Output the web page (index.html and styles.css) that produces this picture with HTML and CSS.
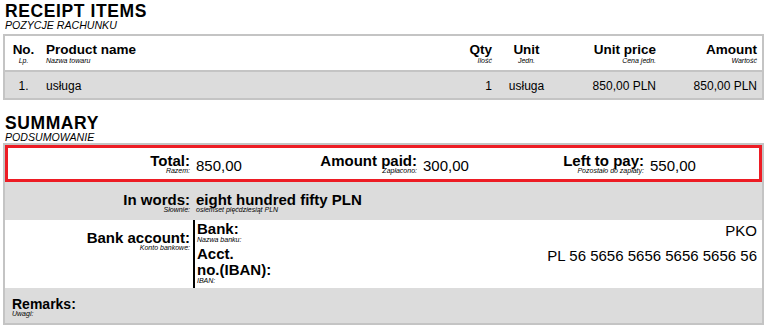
FILE: index.html
```html
<!DOCTYPE html>
<html lang="pl">
<head>
<meta charset="utf-8">
<title>Receipt</title>
<link rel="stylesheet" href="styles.css">
</head>
<body>
<div class="page">
  <section class="items">
    <h2 class="title">RECEIPT ITEMS</h2>
    <div class="subtitle">POZYCJE RACHUNKU</div>
    <div class="table">
      <div class="trow thead">
        <div class="cell c-c"><span class="h">No.</span><span class="s">Lp.</span></div>
        <div class="cell"><span class="h">Product name</span><span class="s">Nazwa towaru</span></div>
        <div class="cell c-r"><span class="h">Qty</span><span class="s">Ilość</span></div>
        <div class="cell c-c"><span class="h">Unit</span><span class="s">Jedn.</span></div>
        <div class="cell c-r"><span class="h">Unit price</span><span class="s">Cena jedn.</span></div>
        <div class="cell c-r last"><span class="h">Amount</span><span class="s">Wartość</span></div>
      </div>
      <div class="trow tbody">
        <div class="cell c-c">1.</div>
        <div class="cell">usługa</div>
        <div class="cell c-r">1</div>
        <div class="cell c-c">usługa</div>
        <div class="cell c-r">850,00 PLN</div>
        <div class="cell c-r last">850,00 PLN</div>
      </div>
    </div>
  </section>

  <section class="summary">
    <h2 class="title">SUMMARY</h2>
    <div class="subtitle">PODSUMOWANIE</div>
    <div class="box">
      <div class="totals">
        <div class="t-label"><span class="lbl">Total:</span><span class="sub">Razem:</span></div>
        <div class="t-value">850,00</div>
        <div class="t-label"><span class="lbl">Amount paid:</span><span class="sub">Zapłacono:</span></div>
        <div class="t-value">300,00</div>
        <div class="t-label"><span class="lbl">Left to pay:</span><span class="sub">Pozostało do zapłaty:</span></div>
        <div class="t-value">550,00</div>
      </div>
      <div class="srow words">
        <div class="label"><span class="lbl">In words:</span><span class="sub">Słownie:</span></div>
        <div class="value"><span class="lbl">eight hundred fifty PLN</span><span class="sub">osiemset pięćdziesiąt PLN</span></div>
      </div>
      <div class="srow bank">
        <div class="label"><span class="lbl">Bank account:</span><span class="sub">Konto bankowe:</span></div>
        <div class="details">
          <div class="bk-label"><span class="bk-lbl">Bank:</span><span class="sub">Nazwa banku:</span></div>
          <div class="bk-val">PKO</div>
          <div class="bk-label"><span class="bk-lbl">Acct. <span class="nw">no.(IBAN):</span></span><span class="sub">IBAN:</span></div>
          <div class="bk-val">PL 56 5656 5656 5656 5656 56</div>
        </div>
      </div>
      <div class="remarks">
        <span class="rlbl">Remarks:</span><span class="sub">Uwagi:</span>
      </div>
    </div>
  </section>
</div>
</body>
</html>
```

FILE: styles.css
```css
* {
  box-sizing: border-box;
  margin: 0;
  padding: 0;
}

body {
  margin: 0;
  background: #fff;
  color: #000;
  font-family: "Liberation Sans", Arial, sans-serif;
}

.page {
  padding: 2px 2px 0 3px;
}

.title {
  font-size: 17.5px;
  line-height: 18px;
  font-weight: 700;
  letter-spacing: 0.6px;
  padding-left: 2px;
}

.subtitle {
  font-size: 10.6px;
  line-height: 11px;
  font-style: italic;
  padding-left: 2px;
}

/* Items table */
.table {
  margin-top: 3px;
  border: 2px solid #c4c4c4;
}

.trow {
  display: grid;
  grid-template-columns: 37px 1fr 40px 61px 103px 102px;
}

.thead .cell {
  padding: 7px 4px 6px;
}

.h {
  display: block;
  font-size: 13.5px;
  line-height: 14px;
  font-weight: 700;
  white-space: nowrap;
}

.s {
  display: block;
  font-size: 7px;
  line-height: 7px;
  font-style: italic;
  white-space: nowrap;
}

.tbody {
  background: #dcdcdc;
  border-top: 2px solid #c4c4c4;
}

.tbody .cell {
  padding: 7px 4px 5px;
  font-size: 12px;
  line-height: 14px;
  white-space: nowrap;
}

.cell.last {
  padding-right: 5px;
}

.c-c {
  text-align: center;
}

.c-r {
  text-align: right;
}

/* Summary */
.summary .title {
  margin-top: 14px;
}

.box {
  border: 2px solid #c4c4c4;
}

.totals {
  height: 37px;
  border: 3px solid #ed1c24;
  display: grid;
  grid-template-columns: 185px 53px 174px 53px 174px 1fr;
  align-items: center;
}

.t-label {
  text-align: right;
  padding-right: 3px;
  white-space: nowrap;
}

.lbl {
  display: block;
  font-size: 15px;
  line-height: 15px;
  font-weight: 700;
  white-space: nowrap;
}

.sub {
  display: block;
  font-size: 7px;
  line-height: 6px;
  font-style: italic;
  white-space: nowrap;
}

.t-value {
  padding-left: 3px;
  margin-top: 5px;
  font-size: 15px;
  line-height: 16px;
  white-space: nowrap;
}

.srow {
  display: grid;
  grid-template-columns: 188px 1fr;
}

.srow .label {
  text-align: right;
  padding: 10px 3px 7px 0;
}

.words {
  background: #dcdcdc;
}

.words .value {
  padding: 10px 0 7px 3px;
}

.bank {
  background: #fff;
}

.details {
  border-left: 2px solid #000;
  padding: 1px 5px 4px 2px;
  display: grid;
  grid-template-columns: 80px 1fr;
  row-gap: 3px;
}

.bk-lbl {
  display: block;
  font-size: 15px;
  line-height: 16px;
  font-weight: 700;
}

.nw {
  white-space: nowrap;
}

.bk-val {
  text-align: right;
  margin-top: 2px;
  font-size: 15px;
  line-height: 16px;
  white-space: nowrap;
}

.remarks {
  background: #dcdcdc;
  padding: 10px 7px 6px;
}

.rlbl {
  display: block;
  font-size: 14px;
  line-height: 13px;
  font-weight: 700;
}
```
